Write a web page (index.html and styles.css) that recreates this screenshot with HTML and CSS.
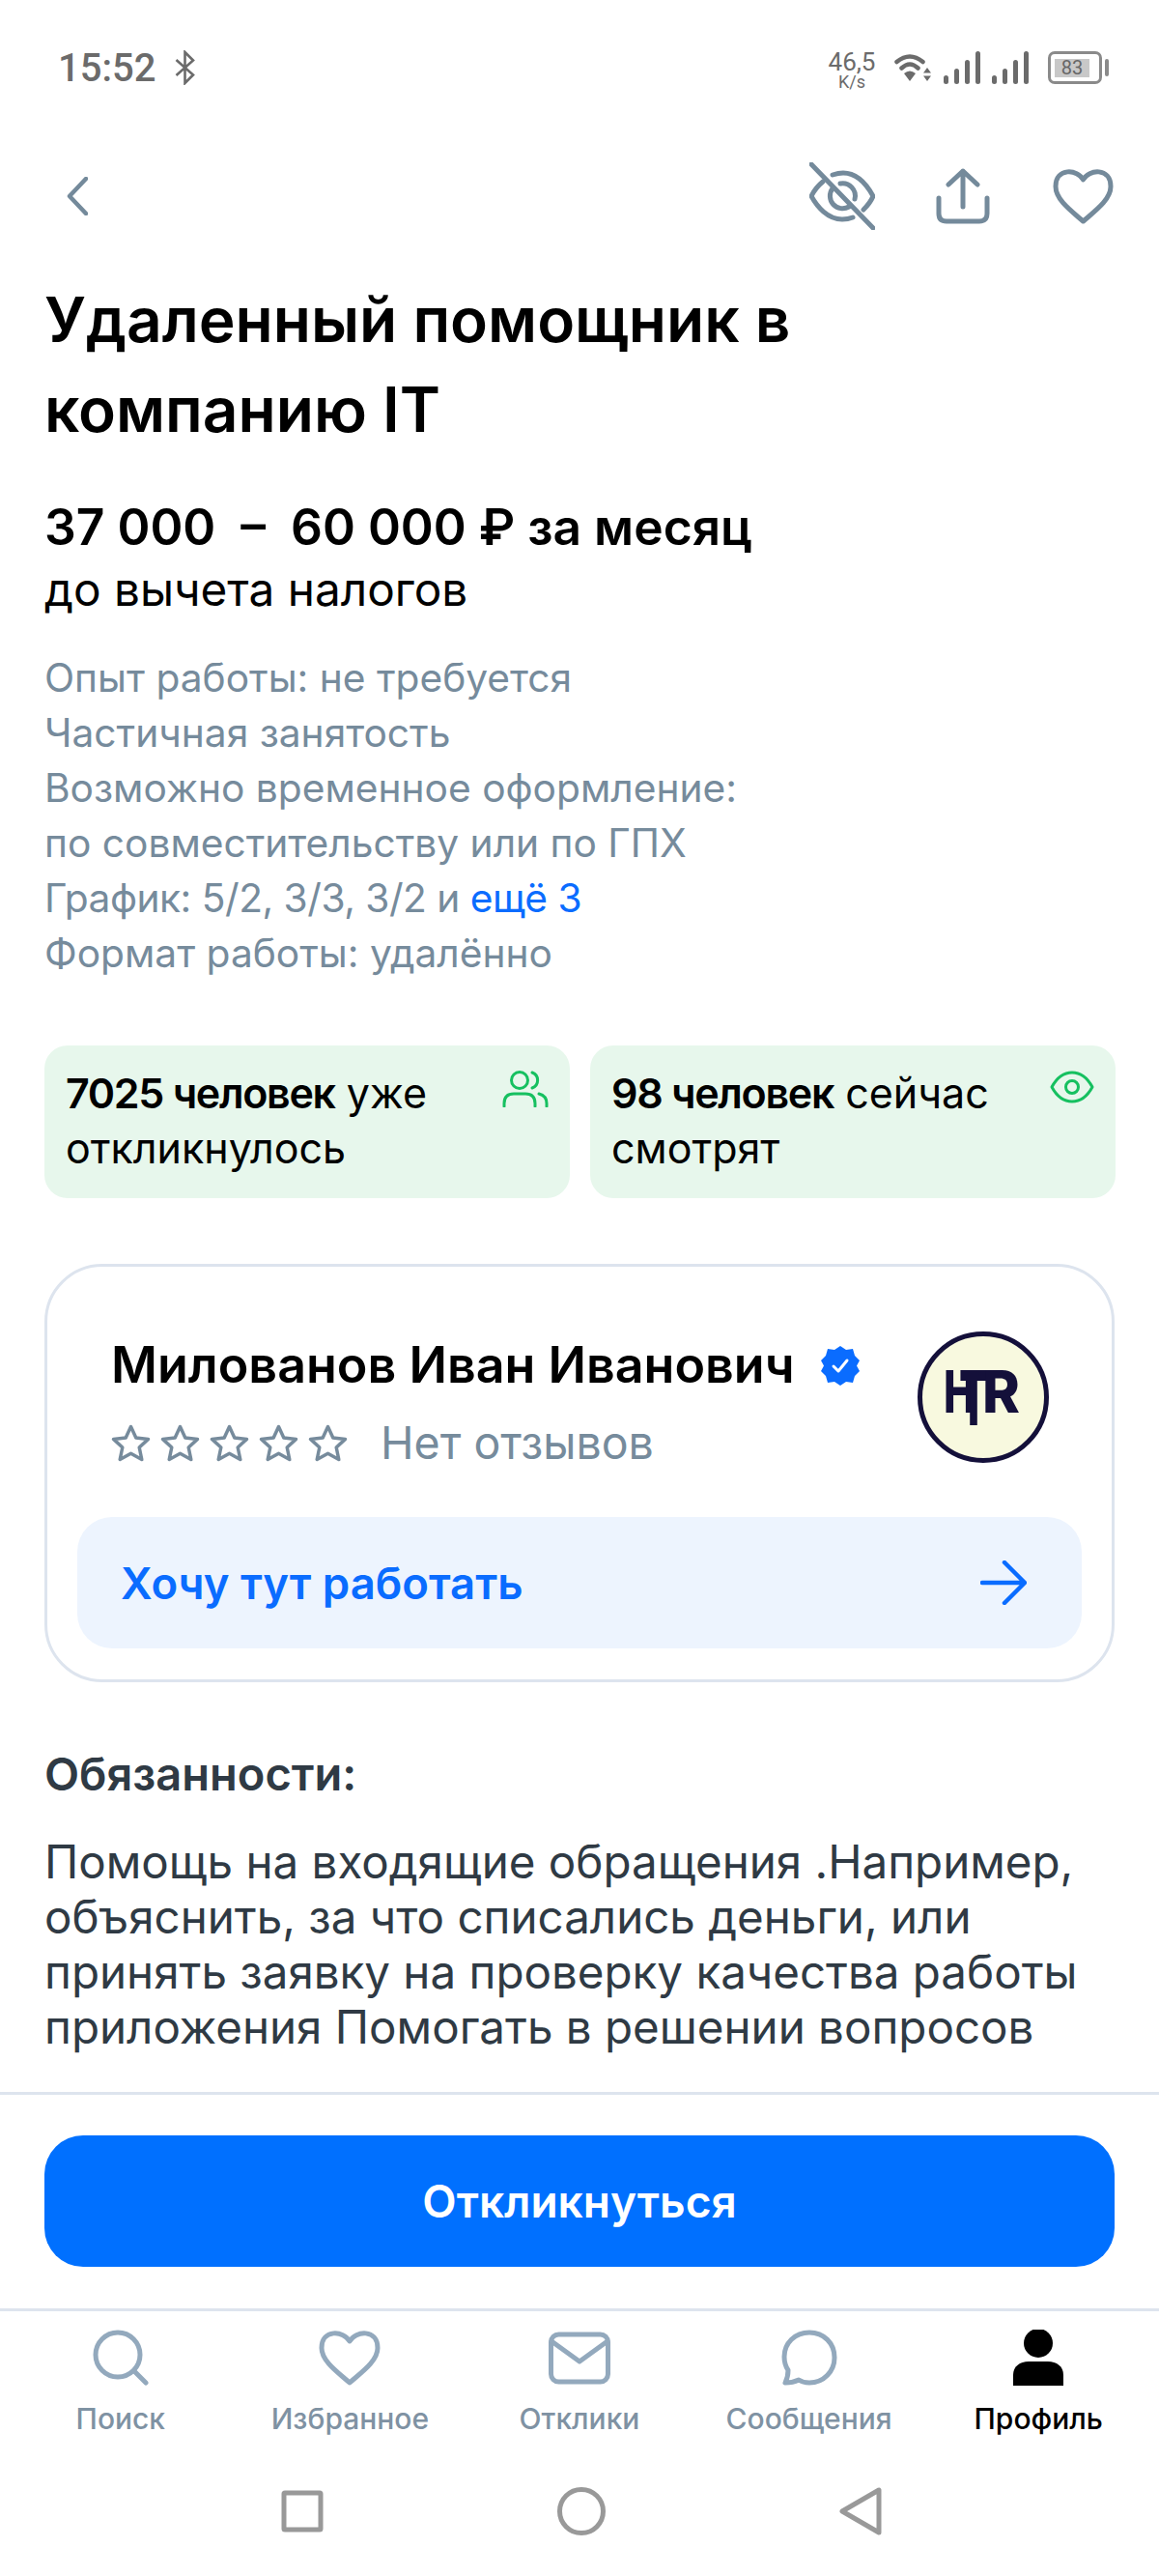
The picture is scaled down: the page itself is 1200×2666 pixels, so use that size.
FILE: index.html
```html
<!DOCTYPE html>
<html lang="ru">
<head>
    <meta charset="UTF-8">
    <meta name="viewport" content="width=device-width, initial-scale=1.0">
    <title>Вакансия</title>
    <link rel="stylesheet" href="styles.css">
</head>
<body>
<div class="page">
    <div class="content">
        <!-- статус-бар -->
        <div class="status">
            <div class="status-left">
                <span class="time">15:52</span>
                <svg width="22" height="36" viewBox="0 0 22 36" fill="none" stroke="#6b6b6b" stroke-width="2.6"><path d="M1.500 10 19 25.500 10.500 34V2L19 10.500 1.500 26"/></svg>
            </div>
            <div class="status-right">
                <div class="speed"><span class="speed-num">46,5</span><span class="speed-unit">K/s</span></div>
                <svg class="wifi" width="40" height="30" viewBox="0 0 40 30" fill="none" stroke="#6b6b6b" stroke-width="4.500" stroke-linecap="round"><path d="M2.500 9Q16 -2 29.500 9M7.500 15.500Q16 7.500 24.500 15.500"/><path d="M10 21Q16 16 22 21L16 29Z" fill="#6b6b6b" stroke="none"/><path d="M34 15l4 5.500h-8zM34 29l-4-5.500h8z" fill="#6b6b6b" stroke="none"/></svg>
                <svg class="bars" width="39" height="34" viewBox="0 0 39 34" fill="#6b6b6b"><rect x="0" y="25" width="5" height="9" rx="2.500"/><rect x="11" y="18" width="5" height="16" rx="2.500"/><rect x="22" y="9" width="5" height="25" rx="2.500"/><rect x="33" y="0" width="5" height="34" rx="2.500"/></svg>
                <svg class="bars" width="39" height="34" viewBox="0 0 39 34" fill="#6b6b6b"><rect x="0" y="25" width="5" height="9" rx="2.500"/><rect x="11" y="18" width="5" height="16" rx="2.500"/><rect x="22" y="9" width="5" height="25" rx="2.500"/><rect x="33" y="0" width="5" height="34" rx="2.500"/></svg>
                <div class="battery"><div class="battery-fill">83</div></div>
                <div class="battery-nub"></div>
            </div>
        </div>

        <!-- шапка -->
        <div class="topbar">
            <svg class="back" width="22" height="40" viewBox="0 0 22 40" fill="none" stroke="#748a9b" stroke-width="4.500" stroke-linecap="round" stroke-linejoin="round"><path d="M20 2 3 20l17 18"/></svg>
            <div class="topbar-actions">
                <svg width="68" height="70" viewBox="0 0 68 70" fill="none" stroke="#748a9b" stroke-width="5" stroke-linecap="round" stroke-linejoin="round"><path d="M2 2 66 68"/><path d="M24 13Q30 11 35 11C50 11 60 24 66 35 64 40 60 45 56 49M45 57Q40 59 34 59C19 59 8 46 2 35 5 29 9 24 14 20"/><path d="M24 27A13 13 0 0 0 41 46M32 22A13 13 0 0 1 47 38"/></svg>
                <svg width="56" height="58" viewBox="0 0 56 58" fill="none" stroke="#748a9b" stroke-width="5" stroke-linecap="round" stroke-linejoin="round"><path d="M28 40V3M13 17 28 3l15 14"/><path d="M3 31V47Q3 55 11 55H45Q53 55 53 47V31"/></svg>
                <svg class="heart" width="63" height="58" viewBox="0 0 63 58" fill="none" stroke="#748a9b" stroke-width="5" stroke-linejoin="round"><path d="M31.500 12C26 1 3 -1 3 19 3 33 20 45 31.500 55 43 45 60 33 60 19 60 -1 37 1 31.500 12Z"/></svg>
            </div>
        </div>

        <h1 class="title">Удаленный помощник в компанию IT</h1>
        <div class="salary">37 000 &nbsp;–&nbsp; 60 000 ₽ за месяц</div>
        <div class="tax">до вычета налогов</div>

        <div class="details">
            <div>Опыт работы: не требуется</div>
            <div>Частичная занятость</div>
            <div>Возможно временное оформление:<br>по совместительству или по ГПХ</div>
            <div class="schedule">График: 5/2, 3/3, 3/2 и <span class="more">ещё 3</span></div>
            <div>Формат работы: удалённо</div>
        </div>

        <div class="stats">
            <div class="stat">
                <div class="stat-text"><b>7025 человек</b> уже откликнулось</div>
                <svg width="48" height="38" viewBox="0 0 48 38" fill="none" stroke="#16c060" stroke-width="3" stroke-linecap="round"><ellipse cx="18" cy="10" rx="8.500" ry="8.500"/><path d="M31 2A8.500 8.500 0 0 1 31 18"/><path d="M2 37V34Q2 24 12 24H24Q34 24 34 34V37"/><path d="M38 24Q46 26 46 34V37"/></svg>
            </div>
            <div class="stat">
                <div class="stat-text"><b>98 человек</b> сейчас смотрят</div>
                <svg width="46" height="34" viewBox="0 0 46 34" fill="none" stroke="#16c060" stroke-width="3" stroke-linejoin="round"><path d="M2 17C8 6 15 2 23 2S38 6 44 17C38 28 31 32 23 32S8 28 2 17Z"/><circle cx="23" cy="17" r="6.500"/></svg>
            </div>
        </div>

        <div class="employer">
            <div class="employer-top">
                <div class="employer-info">
                    <div class="employer-name">
                        <span>Милованов Иван Иванович</span>
                        <svg width="40" height="41" viewBox="0 0 40 41"><path fill="#0a6cff" d="M20 0l6 4 7-1 2 7 5 5-3 5.500 3 5.500-5 5-2 7-7-1-6 4-6-4-7 1-2-7-5-5 3-5.500L0 15l5-5 2-7 7 1z"/><path d="M13 21l5 5 9-11" fill="none" stroke="#fff" stroke-width="3" stroke-linecap="round" stroke-linejoin="round"/></svg>
                    </div>
                    <div class="employer-rating">
                        <div class="stars">
                            <svg width="41" height="39" viewBox="0 0 41 39"><path class="star" d="M20.500 2.500 25.800 14 38.500 15.400 29.200 24 31.800 36.500 20.500 30.200 9.200 36.500 11.800 24 2.500 15.400 15.200 14Z"/></svg>
                            <svg width="41" height="39" viewBox="0 0 41 39"><path class="star" d="M20.500 2.500 25.800 14 38.500 15.400 29.200 24 31.800 36.500 20.500 30.200 9.200 36.500 11.800 24 2.500 15.400 15.200 14Z"/></svg>
                            <svg width="41" height="39" viewBox="0 0 41 39"><path class="star" d="M20.500 2.500 25.800 14 38.500 15.400 29.200 24 31.800 36.500 20.500 30.200 9.200 36.500 11.800 24 2.500 15.400 15.200 14Z"/></svg>
                            <svg width="41" height="39" viewBox="0 0 41 39"><path class="star" d="M20.500 2.500 25.800 14 38.500 15.400 29.200 24 31.800 36.500 20.500 30.200 9.200 36.500 11.800 24 2.500 15.400 15.200 14Z"/></svg>
                            <svg width="41" height="39" viewBox="0 0 41 39"><path class="star" d="M20.500 2.500 25.800 14 38.500 15.400 29.200 24 31.800 36.500 20.500 30.200 9.200 36.500 11.800 24 2.500 15.400 15.200 14Z"/></svg>
                        </div>
                        <span class="no-reviews">Нет отзывов</span>
                    </div>
                </div>
                <svg class="avatar" width="136" height="136" viewBox="0 0 136 136">
                    <circle cx="68" cy="68" r="65.500" fill="#f8f9df" stroke="#14103a" stroke-width="5"/>
                    <text class="logo-letter" x="27" y="84" textLength="33" lengthAdjust="spacingAndGlyphs">H</text>
                    <text class="logo-letter logo-tall" x="43" y="97" textLength="30" lengthAdjust="spacingAndGlyphs">T</text>
                    <text class="logo-letter" x="67" y="84" textLength="39" lengthAdjust="spacingAndGlyphs">R</text>
                </svg>
            </div>
            <div class="want">
                <span>Хочу тут работать</span>
                <svg width="48" height="46" viewBox="0 0 48 46" fill="none" stroke="#0a6cff" stroke-width="4.500" stroke-linecap="round" stroke-linejoin="round"><path d="M2 23H45M25 2l21 21-21 21"/></svg>
            </div>
        </div>

        <h2 class="section-title">Обязанности:</h2>
        <p class="description">Помощь на входящие обращения .Например, объяснить, за что списались деньги, или принять заявку на проверку качества работы приложения Помогать в решении вопросов</p>
    </div>

    <div class="apply-bar">
        <div class="apply-btn">Откликнуться</div>
    </div>

    <!-- нижнее меню -->
    <div class="tabs">
        <div class="tab">
            <svg width="58" height="58" viewBox="0 0 58 58" fill="none" stroke="#93a9bd" stroke-width="5" stroke-linecap="round"><circle cx="26" cy="26" r="23"/><path d="M43 43 55 55"/></svg>
            <span>Поиск</span>
        </div>
        <div class="tab">
            <svg width="64" height="58" viewBox="0 0 64 58" fill="none" stroke="#93a9bd" stroke-width="5" stroke-linejoin="round"><path d="M32 12C26 1 3 -1 3 19 3 33 21 45 32 55 43 45 61 33 61 19 61 -1 38 1 32 12Z"/></svg>
            <span>Избранное</span>
        </div>
        <div class="tab">
            <svg width="64" height="58" viewBox="0 0 64 58" fill="none" stroke="#93a9bd" stroke-width="5" stroke-linejoin="round" stroke-linecap="round"><rect x="2.500" y="5" width="59" height="49" rx="8"/><path d="M3 12 32 33 61 12"/></svg>
            <span>Отклики</span>
        </div>
        <div class="tab">
            <svg width="58" height="58" viewBox="0 0 58 58" fill="none" stroke="#93a9bd" stroke-width="5" stroke-linejoin="round"><path d="M29 3C14 3 3 14 3 28 3 35 5 39 7 42 7 47 6 51 4 55 9 55 14 54 18 52 21 54 25 55 29 55 44 55 55 43 55 29 55 14 44 3 29 3Z"/></svg>
            <span>Сообщения</span>
        </div>
        <div class="tab tab-active">
            <svg width="54" height="58" viewBox="0 0 54 58" fill="#000"><circle cx="27" cy="14" r="15"/><path d="M1 58V47C1 38 8 33 17 33H37C46 33 53 38 53 47V58Z"/></svg>
            <span>Профиль</span>
        </div>
    </div>

    <!-- системная навигация -->
    <div class="sysnav">
        <svg width="44" height="44" viewBox="0 0 44 44" fill="none" stroke="#999" stroke-width="5"><rect x="3" y="3" width="38" height="38" rx="1"/></svg>
        <svg width="50" height="50" viewBox="0 0 50 50" fill="none" stroke="#999" stroke-width="5"><circle cx="25" cy="25" r="22.500"/></svg>
        <svg width="44" height="50" viewBox="0 0 44 50" fill="none" stroke="#999" stroke-width="5" stroke-linejoin="round"><path d="M41 3V47L3 25Z"/></svg>
    </div>
</div>
</body>
</html>
```

FILE: styles.css
```css
* {
    box-sizing: border-box;
}
body {
    margin: 0;
    background: #fff;
    font-family: Inter, "Noto Sans", sans-serif;
    color: #000;
}
.page {
    width: 1200px;
    height: 2666px;
    display: flex;
    flex-direction: column;
    overflow: hidden;
}
.content {
    flex: 1;
    min-height: 0;
    overflow: hidden;
    padding: 0 46px;
}

/* статус-бар */
.status {
    height: 168px;
    margin: 0 -46px;
    padding: 52px 52px 0 60px;
    display: flex;
    justify-content: space-between;
    align-items: flex-start;
    color: #6b6b6b;
    font-family: Roboto, sans-serif;
}
.status-left {
    display: flex;
    align-items: center;
    gap: 20px;
    height: 36px;
}
.time {
    font-size: 40px;
    font-weight: 500;
}
.status-right {
    display: flex;
    align-items: flex-start;
    gap: 11px;
}
.speed {
    width: 50px;
    display: flex;
    flex-direction: column;
    align-items: center;
    margin-right: 8px;
}
.speed-num {
    font-size: 26px;
    line-height: 24px;
}
.speed-unit {
    font-size: 18px;
    line-height: 18px;
}
.wifi {
    margin-top: 3px;
}
.bars {
    margin-top: 1px;
}
.battery {
    width: 56px;
    height: 34px;
    margin-top: 1px;
    border: 3px solid #8a8a8a;
    border-radius: 7px;
    padding: 5px 4px;
    margin-left: 8px;
}
.battery-fill {
    width: 36px;
    height: 19px;
    background: #c8c8c8;
    font-size: 20px;
    line-height: 19px;
    text-align: center;
    color: #666;
}
.battery-nub {
    width: 4px;
    height: 18px;
    margin: 9px 0 0 -8px;
    background: #8a8a8a;
    border-radius: 2px;
}

/* шапка */
.topbar {
    height: 70px;
    display: flex;
    justify-content: space-between;
    align-items: center;
}
.back {
    margin-left: 23px;
}
.topbar-actions {
    display: flex;
    align-items: center;
    gap: 63px;
    margin-right: 1px;
}
.heart {
    margin-left: 2px;
}

.title {
    margin: 46px 0 0;
    width: 900px;
    font-size: 64px;
    font-weight: 600;
    line-height: 93px;
}
.salary {
    margin-top: 40px;
    font-size: 51.500px;
    font-weight: 600;
    line-height: 71px;
}
.tax {
    font-size: 47.700px;
    line-height: 58px;
}
.details {
    margin-top: 34px;
    font-size: 40.700px;
    line-height: 57px;
    color: #768b9c;
}
.schedule {
    letter-spacing: -0.500px;
}
.more {
    color: #0a6cff;
}

/* зелёные плашки */
.stats {
    margin-top: 67px;
    display: grid;
    grid-template-columns: 544px 544px;
    gap: 21px;
}
.stat {
    height: 158px;
    padding: 21px 22px 0 22px;
    background: #e7f7ec;
    border-radius: 24px;
    display: flex;
    justify-content: space-between;
    align-items: flex-start;
}
.stat-text {
    width: 430px;
    font-size: 43px;
    line-height: 57px;
}
.stat-text b {
    font-weight: 600;
    letter-spacing: -1.300px;
}
.stat svg {
    margin-top: 5px;
}

/* работодатель */
.employer {
    margin-top: 68px;
    height: 433px;
    border: 3px solid #dde4ee;
    border-radius: 60px;
    padding: 67px 31px 0;
}
.employer-top {
    display: flex;
    justify-content: space-between;
}
.employer-info {
    padding: 5px 0 0 35px;
}
.employer-name {
    display: flex;
    align-items: center;
    gap: 27px;
    font-size: 52px;
    font-weight: 600;
    line-height: 60px;
    height: 60px;
}
.employer-rating {
    display: flex;
    align-items: center;
    gap: 34px;
    height: 40px;
    margin-top: 30px;
    font-size: 46.500px;
    color: #768b9c;
}
.stars {
    display: flex;
    gap: 10px;
}
.star {
    fill: none;
    stroke: #768b9c;
    stroke-width: 3.500;
    stroke-linejoin: round;
}
.avatar {
    margin-right: 34px;
}
.logo-letter {
    font-family: Inter, sans-serif;
    font-size: 60px;
    font-weight: 800;
    fill: #14103a;
}
.logo-tall {
    font-size: 78px;
}
.want {
    margin-top: 56px;
    height: 136px;
    background: #edf4fe;
    border-radius: 36px;
    padding: 0 57px 0 45px;
    display: flex;
    justify-content: space-between;
    align-items: center;
    color: #0a6cff;
    font-size: 45.500px;
    font-weight: 600;
}

/* описание */
.section-title {
    margin: 65px 0 0;
    font-size: 47px;
    font-weight: 600;
    line-height: 60px;
    color: #2f3a44;
}
.description {
    margin: 32px 0 0;
    font-size: 47.500px;
    line-height: 57px;
    color: #2f3a44;
}

/* кнопка */
.apply-bar {
    height: 227px;
    padding: 42px 46px 0;
    border-top: 3px solid #dde4ee;
    border-bottom: 3px solid #dde4ee;
}
.apply-btn {
    height: 136px;
    background: #0070ff;
    border-radius: 40px;
    display: flex;
    align-items: center;
    justify-content: center;
    color: #fff;
    font-size: 46px;
    font-weight: 600;
}

/* меню */
.tabs {
    height: 147px;
    padding: 19px 6px 0;
    display: grid;
    grid-template-columns: repeat(5, 1fr);
}
.tab {
    display: flex;
    flex-direction: column;
    align-items: center;
    gap: 16px;
    font-size: 30px;
    font-weight: 500;
    line-height: 36px;
    color: #7f92a3;
}
.tab-active {
    color: #000;
}

/* системная навигация */
.sysnav {
    height: 127px;
    padding: 35px 0 0 291px;
    display: flex;
    align-items: flex-start;
    gap: 242px;
}
.sysnav svg:first-child {
    margin-top: 3px;
}
```
